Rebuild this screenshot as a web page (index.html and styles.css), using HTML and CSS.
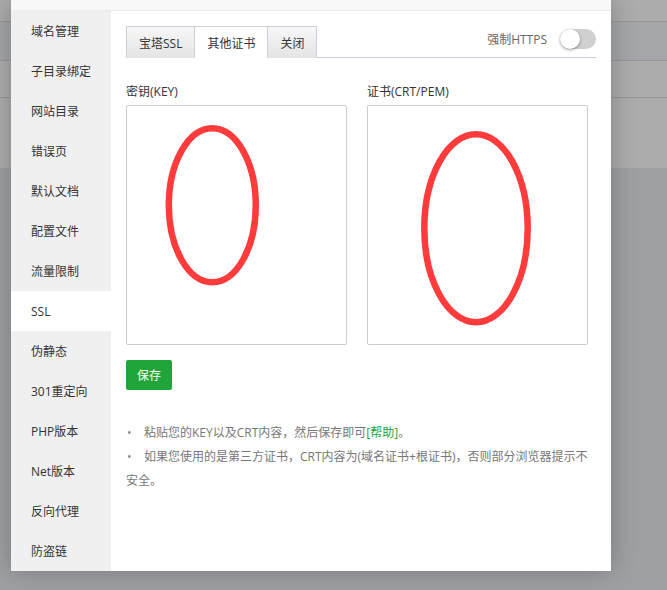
FILE: index.html
```html
<!DOCTYPE html>
<html lang="zh-CN">
<head>
<meta charset="utf-8">
<title>SSL</title>
<link rel="stylesheet" href="styles.css">
</head>
<body>
<div class="backdrop">
  <div class="bg-row r1"></div>
  <div class="bg-row r2"></div>
  <div class="bg-row r3"></div>
  <div class="bg-row r4"></div>
  <div class="bg-rest"></div>
</div>

<div class="modal">
  <div class="modal-head"></div>
  <div class="modal-body">
    <ul class="side">
      <li>域名管理</li>
      <li>子目录绑定</li>
      <li>网站目录</li>
      <li>错误页</li>
      <li>默认文档</li>
      <li>配置文件</li>
      <li>流量限制</li>
      <li class="active">SSL</li>
      <li>伪静态</li>
      <li>301重定向</li>
      <li>PHP版本</li>
      <li>Net版本</li>
      <li>反向代理</li>
      <li>防盗链</li>
    </ul>
    <div class="content">
      <div class="tabbar">
        <div class="tabs">
          <span class="tab">宝塔SSL</span>
          <span class="tab on">其他证书</span>
          <span class="tab">关闭</span>
        </div>
        <div class="force">
          <span class="force-label">强制HTTPS</span>
          <span class="switch"><span class="knob"></span></span>
        </div>
      </div>
      <div class="fields">
        <div class="field">
          <div class="label">密钥(KEY)</div>
          <div class="box">
            <textarea class="ta"></textarea>
            <svg class="mark" width="221" height="240" viewBox="0 0 221 240"><ellipse cx="86.3" cy="100.3" rx="43.5" ry="77" fill="none" stroke="#ff3b3b" stroke-width="6.5"/></svg>
          </div>
        </div>
        <div class="field">
          <div class="label">证书(CRT/PEM)</div>
          <div class="box">
            <textarea class="ta"></textarea>
            <svg class="mark" width="221" height="240" viewBox="0 0 221 240"><ellipse cx="109" cy="123.3" rx="51.7" ry="94" fill="none" stroke="#ff3b3b" stroke-width="6.5"/></svg>
          </div>
        </div>
      </div>
      <button class="btn-save">保存</button>
      <ul class="help">
        <li>粘贴您的KEY以及CRT内容，然后保存即可<a class="link">[帮助]</a>。</li>
        <li>如果您使用的是第三方证书，CRT内容为(域名证书+根证书)，否则部分浏览器提示不安全。</li>
      </ul>
    </div>
  </div>
</div>
</body>
</html>
```

FILE: styles.css
```css
* { box-sizing: border-box; }
html, body { margin: 0; padding: 0; }
body {
  width: 667px;
  height: 590px;
  overflow: hidden;
  position: relative;
  font-family: "Open Sans", "Noto Sans CJK SC", sans-serif;
  font-size: 12px;
  background: #9e9fa3;
}

.backdrop { display: flex; flex-direction: column; height: 590px; }
.bg-row { border-bottom: 1px solid #97979a; background: #acacac; }
.r1 { height: 22px; }
.r2 { height: 39px; background: #a5a6aa; }
.r3 { height: 37px; }
.r4 { height: 70px; border-bottom: none; }
.bg-rest { flex: 1; background: #9fa0a4; }

.modal {
  position: absolute;
  left: 11px;
  top: 0;
  width: 600px;
  height: 571px;
  background: #fff;
  box-shadow: 0 0 24px rgba(0, 0, 0, 0.25);
  display: flex;
  flex-direction: column;
}
.modal-head {
  height: 11px;
  background: #f8f8f8;
  border-bottom: 1px solid #ececec;
}
.modal-body { flex: 1; display: flex; }

.side {
  list-style: none;
  margin: 0;
  padding: 0;
  width: 100px;
  background: #f0f0f0;
}
.side li {
  height: 40px;
  padding-top: 2px;
  line-height: 38px;
  padding-left: 20px;
  color: #333;
  font-size: 12px;
}
.side li.active { background: #fff; }

.content { flex: 1; padding: 15px; }

.tabbar {
  display: flex;
  justify-content: space-between;
  align-items: flex-start;
  border-bottom: 1px solid #cdcddc;
  height: 32px;
}
.tabs { display: flex; }
.tab {
  height: 32px;
  padding-top: 2px;
  line-height: 30px;
  padding-left: 12px;
  padding-right: 12px;
  border: 1px solid #cdcddc;
  border-bottom: none;
  background: linear-gradient(#f7f7f7, #e4e4e4);
  color: #333;
  margin-right: -1px;
}
.tab.on { background: #fff; position: relative; z-index: 1; }

.force { display: flex; align-items: center; height: 24px; margin-top: 1px; }
.force-label { color: #666; margin-right: 13px; }
.switch {
  position: relative;
  width: 36px;
  height: 20px;
  border-radius: 10px;
  background: #d0d0d0;
}
.knob {
  position: absolute;
  left: 0;
  top: 0;
  width: 20px;
  height: 20px;
  border-radius: 50%;
  background: #fff;
  box-shadow: 0 1px 3px rgba(0, 0, 0, 0.4);
}

.fields { display: flex; gap: 20px; margin-top: 24px; }
.field { width: 221px; }
.label { height: 20px; line-height: 20px; color: #333; margin-bottom: 3px; }
.box { position: relative; width: 221px; height: 240px; }
.ta {
  display: block;
  width: 221px;
  height: 240px;
  border: 1px solid #ccc;
  border-radius: 2px;
  resize: none;
  background: #fff;
  margin: 0;
}
.mark { position: absolute; left: 0; top: 0; pointer-events: none; }

.btn-save {
  display: block;
  margin-top: 15px;
  height: 30px;
  padding: 0 11px;
  border: none;
  border-radius: 2px;
  background: #20a53a;
  color: #fff;
  font-family: inherit;
  font-size: 12px;
}

.help { list-style: none; margin: 31px 0 0; padding: 0; }
.help li { line-height: 24px; color: #777; }
.help li::before {
  content: "•";
  display: inline-block;
  width: 17px;
  padding-left: 1px;
  color: #888;
}
.link { color: #20a53a; }
```
